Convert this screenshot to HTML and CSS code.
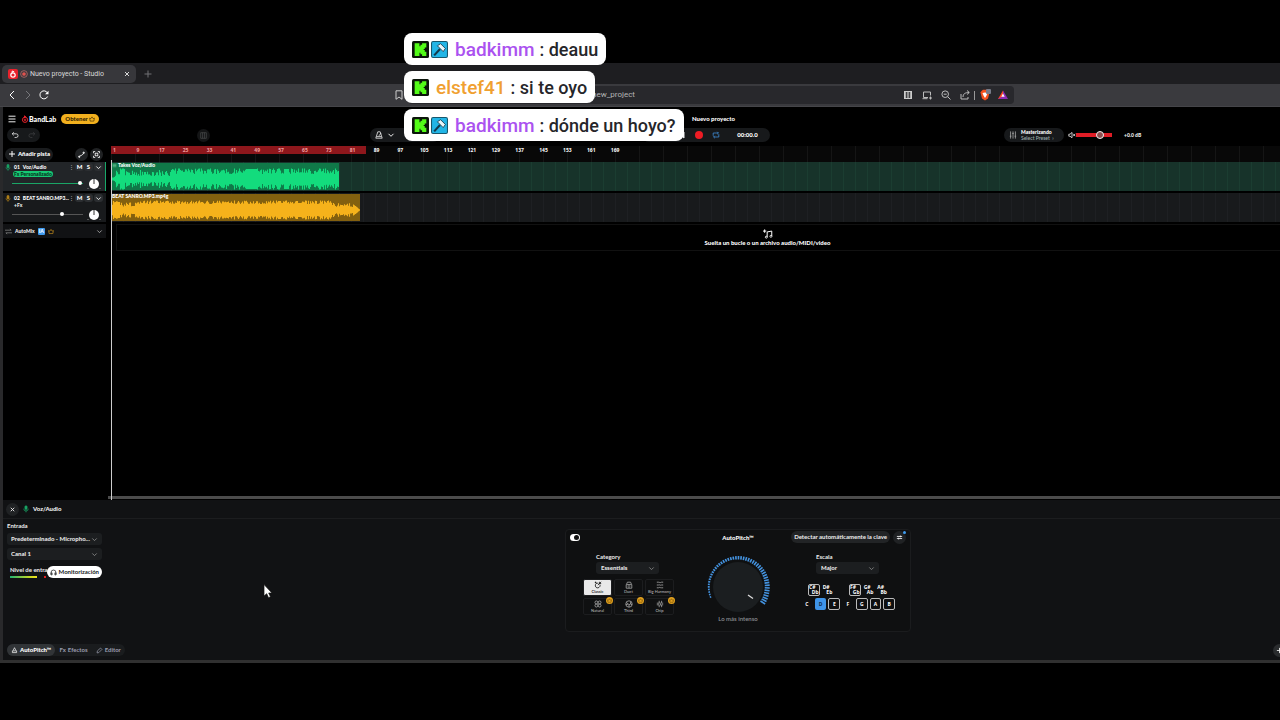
FILE: index.html
```html
<!DOCTYPE html>
<html lang="es">
<head>
<meta charset="utf-8">
<title>Nuevo proyecto - Studio</title>
<link rel="stylesheet" href="styles.css">
</head>
<body>
<svg class="defs" aria-hidden="true">
  <symbol id="chevron" viewBox="0 0 8 8"><path d="M1.5 2.8 4 5.3l2.5-2.5"/></symbol>
  <symbol id="mic" viewBox="0 0 8 10"><rect x="2.6" y=".6" width="2.8" height="5" rx="1.4" fill="currentColor"/><path d="M1 4.6a3 3 0 0 0 6 0M4 7.6v2"/></symbol>
  <symbol id="crown" viewBox="0 0 10 10"><path d="M1 3.500 3 4.400 5 1.500l2 2.900 2-.9-.9 5H1.900z"/></symbol>
  <symbol id="kick" viewBox="0 0 16 16"><rect width="16" height="16" rx="1.500" fill="#0b150a"/><path fill="#53fc18" stroke="none" d="M2.500 2H7v3h1V3.500h1.500V2h4v4H12v1.500h-1v1h1V10h1.500v4h-4v-1.500H8V11H7v3H2.500z"/></symbol>
  <symbol id="hammer" viewBox="0 0 16 16"><rect x=".5" y=".5" width="15" height="15" rx="1.500" fill="#22b5e6" stroke="#17576d"/><path d="M3 13.500 8.500 7.500" stroke="#14394b" stroke-width="2"/><path d="m6 4.500 3-2 4.500 4.500-2 3z" fill="#e9f5fa" stroke="#14394b" stroke-width=".8"/></symbol>
</svg>

<main class="browser">
  <nav class="tabbar">
    <div class="tab">
      <svg class="favicon" viewBox="0 0 10 10"><rect width="10" height="10" rx="2" fill="#e8222c" stroke="none"/><circle cx="5" cy="6" r="2.200" stroke="#fff" stroke-width="1.200"/><path d="M4.200 4V2l2 .8" stroke="#fff"/></svg>
      <svg class="rec-mark" viewBox="0 0 10 10"><circle cx="5" cy="5" r="4.200" stroke="#b86a68"/><circle cx="5" cy="5" r="2.300" fill="#e0524e" stroke="none"/></svg>
      <span class="tab-title">Nuevo proyecto - Studio</span>
      <button class="plain" aria-label="Cerrar pestaña"><svg viewBox="0 0 8 8"><path d="m2 2 4 4M6 2 2 6"/></svg></button>
    </div>
    <button class="plain new-tab" aria-label="Nueva pestaña"><svg viewBox="0 0 8 8"><path d="M4 .5v7M.5 4h7"/></svg></button>
  </nav>

  <div class="toolbar">
    <button class="plain nav-btn" aria-label="Atrás"><svg viewBox="0 0 10 10"><path d="M7 1 3 5l4 4"/></svg></button>
    <button class="plain nav-btn dim" aria-label="Adelante"><svg viewBox="0 0 10 10"><path d="m3 1 4 4-4 4"/></svg></button>
    <button class="plain nav-btn" aria-label="Recargar"><svg viewBox="0 0 10 10"><path d="M8.600 6.500A4 4 0 1 1 8.500 3"/><path d="M9.500.8v3.400H6z" fill="currentColor" stroke="none"/></svg></button>
    <button class="plain bookmark" aria-label="Marcador"><svg viewBox="0 0 10 10"><path d="M2 .8h6v8.500L5 7 2 9.300z"/></svg></button>
    <div class="url">
      <span class="address">new_project</span>
      <svg viewBox="0 0 10 10"><rect x="1.500" y="1.500" width="7" height="7" fill="#aaa" stroke="#ccc"/><path d="M3.700 2v6M6.300 2v6" stroke="#29292d"/></svg>
      <svg viewBox="0 0 10 10"><path d="M6 7.500H1.500V2h7v3.500M.5 8.700h5M7 8h3M8.500 6.500v3"/></svg>
      <svg viewBox="0 0 10 10"><circle cx="4.200" cy="4.200" r="3.300"/><path d="m6.700 6.700 2.800 2.800M2.700 4.200h3"/></svg>
      <svg viewBox="0 0 10 10"><path d="M1 4v5h7V7M3 7c0-3 2-4.500 6-4.500M7 .5l2.300 2L7 4.500"/></svg>
      <i class="url-sep"></i>
      <svg class="brave" viewBox="0 0 12 12"><path d="M2.500 2 4 .8h4L9.500 2l1 1.500-1.500 6L6 11.500l-3-2-1.500-6z" fill="#f4511e" stroke="none"/><path d="M3.500 4 6 3.400 8.500 4 7.500 6.500 6 9 4.500 6.500z" fill="#fff" stroke="none"/><rect x="7" y="0" width="5" height="5" rx="1" fill="#777b88" stroke="none"/></svg>
      <svg viewBox="0 0 10 10"><path d="M5 .5 0 9h5l1-3z" fill="#ff4724" stroke="none"/><path d="M5 .5 10 9H0l5-3z" fill="#8e2bb4" stroke="none"/><path d="m5 3.500 1.700 3.200H3.300z" fill="#fff" stroke="none"/></svg>
    </div>
  </div>

  <div class="app">
    <header class="head">
      <div class="brandbar">
        <button class="plain" aria-label="Menú"><svg class="burger" viewBox="0 0 8 8"><path d="M.5 1.200h7M.5 4h7M.5 6.800h7"/></svg></button>
        <a class="brand" href="#"><svg viewBox="0 0 8 8"><path d="M3.500 3V.8L5 2" /><circle cx="4" cy="4.800" r="2.600"/><circle cx="4" cy="4.800" r=".8"/></svg>BandLab</a>
        <button class="upgrade">Obtener <svg viewBox="0 0 10 10"><use href="#crown"/></svg></button>
      </div>
      <h1>Nuevo proyecto</h1>
    </header>
    <div class="controls">
      <div class="pill undo">
        <button class="plain" aria-label="Deshacer"><svg viewBox="0 0 10 10"><path d="M3.500 1.500 1.500 3.500l2 2M1.500 3.500h5a2.300 2.300 0 0 1 0 4.600H4.500"/></svg></button>
        <button class="plain dim" aria-label="Rehacer"><svg viewBox="0 0 10 10"><path d="m6.500 1.500 2 2-2 2M8.500 3.500h-5a2.300 2.300 0 0 0 0 4.600h2"/></svg></button>
      </div>
      <button class="round keys-btn" aria-label="Teclado"><svg viewBox="0 0 10 10"><path d="M1 1h8v8H1zM3.700 1v8M6.300 1v8"/></svg></button>
      <div class="pill metro">
        <button class="plain" aria-label="Metrónomo"><svg viewBox="0 0 10 10"><path d="M3.500 1h3L9 9H1zM2 7h6M5 6 7.500 2.500"/></svg></button>
        <button class="plain" aria-label="Opciones"><svg viewBox="0 0 8 8"><use href="#chevron"/></svg></button>
      </div>
      <div class="pill transport">
        <button class="plain" aria-label="Inicio"><svg viewBox="0 0 8 8"><path d="M6 1v6L2 4z" fill="#fff"/></svg></button>
        <button class="plain" aria-label="Grabar"><i class="rec"></i></button>
        <button class="plain loop" aria-label="Bucle"><svg viewBox="0 0 10 10"><path d="M1.500 6V2.500H8M6.500 1 8 2.500 6.500 4M8.500 4v3.500H2M3.500 6 2 7.500 3.500 9"/></svg></button>
        <output>00:00.0</output>
      </div>
      <button class="pill master"><svg viewBox="0 0 10 10"><path d="M2 .5v9M5 .5v9M8 .5v9M1 6.500h2M4 3h2M7 6.500h2"/></svg><span><b>Masterizando</b><small>Select Preset &nbsp;›</small></span></button>
      <svg class="mute" viewBox="0 0 10 8"><path d="M1 3v2.500h1.500L5 7.500V.8L2.500 3zM6.500 2.500l2.500 3M9 2.500l-2.500 3"/></svg>
      <input class="volume" type="range" aria-label="Volumen general" value="70">
      <span class="db">+0.0 dB</span>
    </div>

    <div class="workspace">
      <aside class="tracks">
        <div class="track-tools">
          <button class="pill add"><svg viewBox="0 0 8 8"><path d="M4 1v6M1 4h6"/></svg>Añadir pista</button>
          <button class="round" aria-label="Automatización"><svg viewBox="0 0 8 8"><path d="m1.800 6.200 1.200-1.200h1.200l1.600-2h1"/><circle cx="1.500" cy="6.500" r=".8" fill="currentColor"/><circle cx="6.500" cy="2" r=".8" fill="currentColor"/></svg></button>
          <button class="round" aria-label="Ajustar"><svg viewBox="0 0 8 8"><rect x="2.500" y="2.500" width="3" height="3"/><path d="M.5 2.500v-2h2M5.500.5h2v2M7.500 5.500v2h-2M2.500 7.500h-2v-2"/></svg></button>
        </div>
        <section class="track green selected">
          <div class="track-row"><svg class="tmic" viewBox="0 0 8 10"><use href="#mic"/></svg><b>01</b><b class="tname">Voz/Audio</b><i class="dots">⋮</i><button class="ms">M</button><button class="ms">S</button><button class="ms" aria-label="Más"><svg viewBox="0 0 8 8"><use href="#chevron"/></svg></button></div>
          <button class="fx on">Fx Personalizado</button>
          <div class="track-row mix"><input type="range" class="fader" aria-label="Volumen pista 1" value="98"><svg class="knob" viewBox="0 0 14 12"><circle cx="7" cy="6" r="5" fill="#fff" stroke="none"/><path d="M7 1v5" stroke="#333"/><path d="M1 10v1M13 10v1" stroke="#888"/></svg></div>
        </section>
        <section class="track yellow">
          <div class="track-row"><svg class="tmic" viewBox="0 0 8 10"><use href="#mic"/></svg><b>02</b><b class="tname">BEAT SANRO.MP3...</b><i class="dots">⋮</i><button class="ms">M</button><button class="ms">S</button><button class="ms" aria-label="Más"><svg viewBox="0 0 8 8"><use href="#chevron"/></svg></button></div>
          <button class="fx">+Fx</button>
          <div class="track-row mix"><input type="range" class="fader" aria-label="Volumen pista 2" value="71"><svg class="knob" viewBox="0 0 14 12"><circle cx="7" cy="6" r="5" fill="#fff" stroke="none"/><path d="M7 1v5" stroke="#333"/><path d="M1 10v1M13 10v1" stroke="#888"/></svg></div>
        </section>
        <section class="automix"><svg viewBox="0 0 8 8"><path d="M0 2.500h7M5.500 1 7 2.500M8 5.500H1M2.500 7 1 5.500"/></svg><b>AutoMix</b><em>IA</em><svg class="gold" viewBox="0 0 10 10"><use href="#crown"/></svg><svg class="end" viewBox="0 0 8 8"><use href="#chevron"/></svg></section>
      </aside>

      <div class="timeline">
        <div class="ruler"><div class="ruler-labels" id="ruler"></div></div>
        <div class="lane lane-green"><div class="clip clip-green"><span><svg viewBox="0 0 8 8"><path d="M1 2h6M1 4h6M1 6h6"/></svg><b>Takes</b> &nbsp;Voz/Audio</span><svg class="wave" id="wave-voice" viewBox="0 0 228 22" preserveAspectRatio="none"></svg></div></div>
        <div class="lane lane-yellow"><div class="clip clip-yellow"><span>BEAT SANRO.MP3.mp4g</span><svg class="wave" id="wave-beat" viewBox="0 0 249 22" preserveAspectRatio="none"></svg></div></div>
        <div class="drop"><svg viewBox="0 0 12 12"><path d="M5 9.500V3.500l5.500-1v6M2 .5v4M0 2.500h4" stroke-width="1.200"/><circle cx="4" cy="9.800" r="1.200"/><circle cx="9.500" cy="8.800" r="1.200"/></svg>Suelta un bucle o un archivo audio/MIDI/video</div>
        <div class="space"></div>
        <div class="scrollbar"></div>
        <i class="playhead"></i>
      </div>
    </div>

    <section class="panel">
      <header class="panel-head"><button class="round" aria-label="Cerrar"><svg viewBox="0 0 8 8"><path d="m2 2 4 4M6 2 2 6"/></svg></button><svg class="tmic green" viewBox="0 0 8 10"><use href="#mic"/></svg><b>Voz/Audio</b></header>
      <div class="panel-body">
        <div class="inputs">
          <label for="source">Entrada</label>
          <div class="select"><select id="source"><option>Predeterminado - Micropho...</option></select><svg viewBox="0 0 8 8"><use href="#chevron"/></svg></div>
          <div class="select"><select aria-label="Canal"><option>Canal 1</option></select><svg viewBox="0 0 8 8"><use href="#chevron"/></svg></div>
          <div class="level"><span>Nivel de entrad</span><div class="meter"><i></i></div>
            <button class="monitor"><svg viewBox="0 0 10 10"><path d="M1.500 8V5a3.500 3.500 0 0 1 7 0v3M1.500 5.500H3v3H1.500zM7 5.500h1.500v3H7z"/></svg>Monitorización</button></div>
        </div>

        <div class="pitch">
          <div class="pitch-head">
            <button class="toggle" role="switch" aria-checked="true" aria-label="Activar AutoPitch"></button>
            <h2>AutoPitch™</h2>
            <div class="pitch-actions"><button class="pill detect">Detectar automáticamente la clave</button><button class="round tune" aria-label="Ajustes"><svg viewBox="0 0 8 8"><path d="M1 2.800h6M1 5.200h6M5 1.800v2M3 4.200v2"/></svg></button></div>
          </div>
          <div class="pitch-body">
            <div class="category">
              <div class="field"><label for="cat">Category</label><div class="select"><select id="cat"><option>Essentials</option></select><svg viewBox="0 0 8 8"><use href="#chevron"/></svg></div></div>
              <div class="presets">
                <button class="active"><svg viewBox="0 0 10 10"><path d="M5.500 2.800C3 2 1.200 4 1.700 6.300s3 3 4.600 1.700S7.800 5.500 7.300 4.500M4.800 5.200 9 1M6.800 1v2.200H9M2 .8v2M1 1.800h2"/></svg>Classic</button>
                <button><svg viewBox="0 0 10 10"><path d="M1.500 4.500h7V9h-7zM2 4l1-2.500h4L8 4M5 4.500V9M3 6.500h.5M6.500 6.500H7"/></svg>Duet</button>
                <button><svg viewBox="0 0 10 10"><path d="M1 1.500h2c1.500 0 2 1 4 0h2M1 5h2c1.500-1 2 1 4 0h2M1 8.500h2c1.500-1 2 0 4 0h2"/></svg>Big Harmony</button>
                <button><svg viewBox="0 0 10 10"><circle cx="3" cy="3" r="1.800"/><circle cx="7" cy="3" r="1.800"/><circle cx="3" cy="7" r="1.800"/><circle cx="7" cy="7" r="1.800"/></svg>Natural<i><svg viewBox="0 0 10 10"><use href="#crown"/></svg></i></button>
                <button><svg viewBox="0 0 10 10"><circle cx="5" cy="5" r="4"/><path d="M5 9V6L2 3M5 6l2-1V2M1 6l3-1M7 5l2 1"/></svg>Third<i><svg viewBox="0 0 10 10"><use href="#crown"/></svg></i></button>
                <button><svg viewBox="0 0 10 10"><path d="M4 1v3H1M7 1v3h2M4 9V6H1M7 9V6h2M5 3l1 4"/></svg>Chip<i><svg viewBox="0 0 10 10"><use href="#crown"/></svg></i></button>
              </div>
            </div>
            <div class="dial"><svg id="dial" viewBox="-33 -33 66 60"><circle r="25" fill="#1b1e20" stroke="none"/><path d="m10 8 5 3.500" stroke="#ddd" stroke-width="1.300"/></svg><span>Lo más intenso</span></div>
            <div class="scale">
              <div class="field"><label for="scale">Escala</label><div class="select"><select id="scale"><option>Major</option></select><svg viewBox="0 0 8 8"><use href="#chevron"/></svg></div></div>
              <div class="notes sharps"><button class="in"><span>C#</span><span>Db</span></button><button><span>D#</span><span>Eb</span></button><span></span><button class="in"><span>F#</span><span>Gb</span></button><button><span>G#</span><span>Ab</span></button><button><span>A#</span><span>Bb</span></button></div>
              <div class="notes"><button>C</button><button class="root">D</button><button class="in">E</button><button>F</button><button class="in">G</button><button class="in">A</button><button class="in">B</button></div>
            </div>
          </div>
        </div>
      </div>
      <footer class="panel-foot">
        <div class="pill tabs"><button class="current"><svg viewBox="0 0 10 10"><path d="M5 1 3 5M5 1l2 4M2 5.500h6v2.500H2z"/></svg>AutoPitch™</button><button><i>Fx</i> Efectos</button><button><svg viewBox="0 0 10 10"><path d="m1.500 8.500.5-3 4.500-4 2 2-4.500 4.500z"/></svg>Editor</button></div>
        <button class="round help" aria-label="Ayuda"><svg viewBox="0 0 8 8"><path d="M4 1v6M1 4h6"/></svg></button>
      </footer>
    </section>
  </div>
</main>

<ul class="chat">
  <li><svg viewBox="0 0 16 16"><use href="#kick"/></svg><svg viewBox="0 0 16 16"><use href="#hammer"/></svg><b class="violet">badkimm</b><span>: deauu</span></li>
  <li><svg viewBox="0 0 16 16"><use href="#kick"/></svg><b class="orange">elstef41</b><span>: si te oyo</span></li>
  <li><svg viewBox="0 0 16 16"><use href="#kick"/></svg><svg viewBox="0 0 16 16"><use href="#hammer"/></svg><b class="violet">badkimm</b><span>: dónde un hoyo?</span></li>
</ul>
<svg class="cursor" viewBox="0 0 10 15"><path d="M1 1v11.500l2.700-2.300 1.800 4 2-.9-1.800-3.800H9z" fill="#fff" stroke="#111" stroke-width=".7"/></svg>
<script src="app.js"></script>
</body>
</html>
```
FILE: styles.css
```css
* { box-sizing: border-box; }
html { background: #000; }
body {
  margin: 0;
  min-height: 100vh;
  padding: 63px 0 57px;
  display: flex;
  flex-direction: column;
  position: relative;
  overflow: hidden;
  background: #000;
  color: #eee;
  font: 600 6px/8px Lato, "Open Sans", sans-serif;
}
.defs { position: absolute; width: 0; height: 0; }
svg { width: 8px; height: 8px; fill: none; stroke: currentColor; stroke-width: 1; flex: none; display: block; }
button { font: inherit; color: inherit; border: 0; padding: 0; margin: 0; background: none; display: flex; align-items: center; justify-content: center; flex: none; }
h1, h2 { margin: 0; font: inherit; font-weight: 900; color: #fff; }
b { font-weight: 900; }
i, em { font-style: normal; }
input[type=range] { appearance: none; margin: 0; background: none; }

.browser { flex: 1; display: flex; flex-direction: column; overflow: hidden; border-bottom: 3px solid #303030; }

/* browser chrome */
.tabbar { display: flex; align-items: center; height: 21px; padding-left: 2px; background: #1e1e21; }
.tab { display: flex; align-items: center; gap: 2px; width: 134px; height: 18px; padding: 0 5px 0 6px; border-radius: 5px; background: #37373b; color: #d8d8d8; font: 400 7px/10px Roboto, sans-serif; }
.tab .favicon { width: 10px; height: 10px; }
.tab-title { flex: 1; white-space: nowrap; }
.new-tab { margin-left: 8px; color: #707074; }
.toolbar { display: flex; align-items: center; height: 23px; padding-left: 6px; background: #3a3a3e; border-bottom: 1px solid #454549; }
.nav-btn { width: 11px; margin-right: 5px; color: #fff; }
.nav-btn svg, .bookmark svg { width: 10px; height: 10px; }
.dim { color: #77777b; }
.bookmark { margin-left: 340px; color: #ccc; }
.url { display: flex; align-items: center; gap: 9px; width: 606px; height: 18px; margin-left: 4px; padding-right: 6px; border-radius: 4px; background: #28282c; color: #bbb; }
.url svg { width: 10px; height: 10px; }
.url .brave { width: 12px; height: 12px; margin-right: -2px; }
.address { flex: 1; padding-left: 184px; font: 400 8px/12px Roboto, sans-serif; color: #b4b4b4; }
.url-sep { width: 1px; height: 9px; margin: 0 -5px; background: #999; }

/* studio */
.app { flex: 1; display: flex; flex-direction: column; width: calc(100% + 139px); border-left: 3px solid #29292b; }
.head { display: grid; grid-template-columns: 1fr auto 1fr; align-items: center; height: 20px; padding: 3px 0 0 5px; }
.brandbar { display: flex; align-items: center; gap: 5px; }
.brand { display: flex; align-items: center; color: #fff; text-decoration: none; font-size: 7px; font-weight: 900; }
.brand svg { color: #e8222c; }
.upgrade { gap: 1px; height: 10px; padding: 0 4px; border-radius: 5px; background: #f2b01e; color: #332200; font-weight: 900; }
.upgrade svg { width: 6px; }
.controls { display: flex; align-items: center; height: 16px; padding-left: 4px; }
.pill { display: flex; align-items: center; height: 14px; border-radius: 7px; background: #17191b; }
.undo { width: 33px; justify-content: space-around; }
.undo .dim { color: #3c3e40; }
.round { width: 13px; height: 13px; border-radius: 50%; background: #202224; }
.round svg { width: 7px; height: 7px; }
.keys-btn { margin-left: 157px; color: #4a4c4e; background: #141516; }
.metro { width: 70px; margin-left: 160px; padding-left: 5px; gap: 4px; }
.transport { width: 128px; margin-left: 202px; padding-left: 36px; gap: 9px; }
.rec { width: 8px; height: 8px; border-radius: 50%; background: #ed1c24; }
.loop { color: #3f8cd6; }
.transport output { flex: 1; padding-right: 4px; text-align: center; font-weight: 900; color: #fff; }
.master { width: 60px; margin-left: 234px; padding: 0 5px; gap: 4px; justify-content: flex-start; color: #aaa; font-size: 5px; line-height: 6px; text-align: left; }
.master b, .master small { display: block; }
.master b { color: #fff; }
.master small { font-size: 5px; color: #9aa; }
.mute { margin-left: 4px; }
.volume { width: 36px; height: 10px; margin-left: 7px; }
.volume::-webkit-slider-runnable-track { height: 4px; background: linear-gradient(#e01d26 40%, #500 40% 60%, #e01d26 60%); }
.volume::-webkit-slider-thumb { appearance: none; width: 8px; height: 8px; margin-top: -2px; border: 1px solid #eee; border-radius: 50%; background: #8a5050; }
.db { margin-left: 12px; font-weight: 900; font-size: 5px; }

.workspace { flex: 1; display: flex; min-height: 200px; padding-top: 3px; }
.tracks { width: 103px; flex: none; }
.track-tools { display: flex; align-items: center; height: 16px; padding: 0 3px 0 2px; gap: 2px; }
.add { width: 48px; height: 13px; gap: 2px; margin-right: auto; color: #fff; font-weight: 900; background: #1a1c1e; }
.track { height: 29px; margin-bottom: 2px; padding: 1px 2px 0; background: #181a1c; border-right: 1px solid transparent; }
.track.selected { background: #222528; border-color: #18a868; }
.track-row { display: flex; align-items: center; height: 8px; font-size: 5px; color: #fff; }
.track-row b { margin-left: 3px; }
.tmic { width: 6px; height: 7px; }
.green .tmic, .tmic.green { color: #1aa566; }
.yellow .tmic { color: #b5841a; }
.track-row .tname { flex: 1; white-space: nowrap; }
.dots { width: 6px; color: #999; }
.ms { min-width: 9px; height: 8px; font-weight: 900; font-size: 6px; background: #2b2e31; border-radius: 3px; }
.ms svg { width: 7px; height: 7px; }
.ms:last-child { margin-left: 1px; }
.fx { height: 6px; margin-left: 8px; padding: 0 1px; border-radius: 3px; font-size: 5px; line-height: 6px; font-weight: 900; }
.fx.on { background: #16c873; color: #06321d; }
.mix { height: 13px; padding: 0 2px 0 7px; }
.fader { flex: 1; min-width: 0; height: 8px; color: #555; }
.green .fader { color: #1aa566; }
.fader::-webkit-slider-runnable-track { height: 1px; background: currentColor; }
.fader::-webkit-slider-thumb { appearance: none; width: 4px; height: 4px; margin-top: -2px; border-radius: 50%; background: #fff; }
.knob { width: 14px; height: 12px; margin-left: 4px; }
.automix { display: flex; align-items: center; gap: 3px; height: 14px; padding: 0 3px 0 2px; background: #111214; font-size: 5px; }
.automix svg { width: 7px; height: 7px; color: #777; }
.automix em { padding: 0 1px; border-radius: 1px; background: #3f9bef; color: #fff; font-weight: 900; line-height: 7px; }
.automix .gold { width: 6px; color: #e2a11e; }
.automix .end { margin-left: auto; color: #aaa; }

.timeline { flex: 1; display: flex; flex-direction: column; position: relative; padding-left: 5px; }
.ruler { height: 16px; background: repeating-linear-gradient(90deg, #151515 0 1px, transparent 1px 24px) #080808; }
.ruler-labels { display: grid; grid-template-columns: 15px repeat(21, 1fr); width: 516px; height: 8px; font: 700 5px/8px "Open Sans", sans-serif; text-align: center; background: linear-gradient(90deg, #8e171c 255px, transparent 255px); color: #fff; }
.ruler-labels .looped { color: #f0a0a0; }
.ruler-labels :first-child { text-align: left; padding-left: 2px; }
.lane { height: 29px; margin-bottom: 2px; padding: 1px 0; }
.lane-green { background: repeating-linear-gradient(90deg, #1b3d31 0 1px, transparent 1px 12px) #17332a; }
.lane-yellow { background: repeating-linear-gradient(90deg, #1e2023 0 1px, transparent 1px 12px) #181a1c; }
.clip { display: flex; flex-direction: column; height: 100%; color: #fff; font-size: 5px; line-height: 5px; font-weight: 900; }
.clip span { display: flex; height: 5px; padding-left: 1px; }
.clip span svg { width: 5px; height: 5px; }
.clip-green { width: 228px; background: #107848; }
.clip-yellow { width: 249px; background: #83600f; }
.clip-green span svg { margin-right: 1px; color: #6dc79b; }
.wave { width: 100%; height: 22px; }
.clip-green .wave { color: #13dc7d; }
.clip-yellow .wave { color: #f6b21b; }
.drop { display: flex; flex-direction: column; align-items: center; height: 27px; margin-left: 5px; padding-top: 4px; border: 1px solid #111; font-weight: 900; color: #fff; }
.drop svg { width: 10px; height: 10px; }
.space { flex: 1; }
.scrollbar { height: 3px; margin: 0 0 1px -3px; background: #4b4b4b; }
.playhead { position: absolute; left: 5px; top: 14px; bottom: 0; width: 1px; background: #ccc; }

/* lower panel */
.panel { background: #111214; }
.panel-head { display: flex; align-items: center; gap: 4px; height: 19px; padding-left: 3px; border-bottom: 1px solid #1c1d1f; font-size: 6px; }
.panel-head .tmic { height: 8px; }
.panel-body { display: grid; grid-template-columns: 105px 1fr 51px; align-items: start; height: 125px; }
.inputs { padding: 3px 0 0 4px; width: 99px; display: flex; flex-direction: column; gap: 3px; }
label { font-weight: 700; }
.select { position: relative; height: 12px; }
.select select { appearance: none; width: 100%; height: 12px; border: 0; border-radius: 3px; padding: 0 12px 0 5px; background: #1c1e20; color: #e4e4e4; font: 900 6px/12px Lato, sans-serif; }
.inputs .select select { padding: 0 10px 0 4px; }
.select svg { position: absolute; right: 4px; top: 3px; width: 7px; height: 7px; color: #888; }
.level { position: relative; padding: 3px 0 0 3px; font-weight: 700; }
.meter { display: flex; width: 36px; height: 2px; margin-top: 2px; background: linear-gradient(90deg, #22b473, #c9d822 20px, #f0e020 27px, transparent 27px); }
.meter i { width: 2px; height: 2px; margin-left: auto; background: #d22; }
.monitor { position: absolute; right: 0; top: 3px; gap: 2px; height: 12px; padding: 0 3px; border-radius: 6px; background: #fff; color: #16181a; font-weight: 700; }
.monitor svg { width: 7px; height: 7px; }

.pitch { justify-self: center; width: 346px; height: 103px; margin-top: 10px; padding: 1px 4px; border: 1px solid #1b1c1e; border-radius: 4px; background: #0f1011; }
.pitch-head { display: grid; grid-template-columns: 1fr auto 1fr; align-items: center; height: 13px; }
.toggle { justify-content: flex-end; width: 10px; height: 7px; padding: 1px; border-radius: 4px; background: #fff; }
.toggle::after { content: ""; width: 5px; height: 5px; border-radius: 50%; background: #111; }
.pitch-actions { display: flex; justify-content: flex-end; gap: 3px; }
.detect { height: 12px; padding: 0 3px; background: #222426; font-weight: 700; }
.tune { position: relative; }
.tune::after { content: ""; position: absolute; right: 0; top: 0; width: 3px; height: 3px; border-radius: 50%; background: #3f9bef; }
.pitch-body { display: grid; grid-template-columns: 1fr 70px 1fr; padding-top: 9px; }
.field { width: 63px; display: flex; flex-direction: column; }
.field .select { margin-top: 1px; }
.category { padding-left: 13px; }
.category .field { margin-left: 13px; }
.presets { display: grid; grid-template-columns: repeat(3, 29px); gap: 2px; margin-top: 5px; }
.presets button { position: relative; flex-direction: column; height: 17px; border: 1px solid #1c1d1f; border-radius: 2px; font-size: 4px; line-height: 5px; color: #aaa; white-space: nowrap; }
.presets .active { background: #e9e9e9; color: #111; }
.presets i { position: absolute; right: -2px; top: -2px; width: 7px; height: 7px; padding: 1px; border-radius: 50%; background: #e2a11e; color: #5d3f00; }
.presets i svg { width: 5px; height: 5px; }
.dial { display: flex; flex-direction: column; align-items: center; color: #8b8e91; white-space: nowrap; }
.dial svg { width: 66px; height: 60px; margin-top: 1px; }
.dial span { margin-top: 1px; }
.scale { padding-left: 31px; }
.scale .field { margin-left: 12px; }
.notes { display: grid; grid-template-columns: repeat(7, 1fr); gap: 2px; width: 94px; margin: 2px 0 0 -3px; font: 700 5px/5px "Open Sans", sans-serif; }
.notes button { height: 12px; border: 1px solid transparent; border-radius: 2px; color: #fff; }
.notes .in { border-color: #bbb; }
.notes .root { background: #3f94e8; color: #0e2a48; }
.sharps { margin-top: 10px; padding: 0 7px; grid-template-columns: repeat(6, 1fr); }
.sharps button { flex-direction: column; line-height: 5px; }
.sharps button span:first-child { align-self: flex-start; }
.sharps button span:last-child { align-self: flex-end; }

.panel-foot { display: flex; align-items: center; justify-content: space-between; height: 16px; padding: 0 139px 4px 4px; }
.tabs { height: 12px; background: #1a1c1e; color: #9a9cae; }
.tabs button { gap: 2px; height: 12px; padding: 0 4px; border-radius: 6px; font-weight: 700; }
.tabs .current { background: #313437; color: #fff; font-weight: 900; }
.tabs svg { width: 7px; height: 7px; }
.help { margin-right: -6px; background: #2a2c2e; }

/* overlays */
.chat { position: absolute; left: 404px; top: 33px; margin: 0; padding: 0; list-style: none; display: flex; flex-direction: column; align-items: flex-start; gap: 6px; }
.chat li { display: flex; align-items: center; height: 32px; padding: 1px 8px 0; border-radius: 8px; background: #fff; color: #26262a; font: 500 18px/31px Roboto, sans-serif; white-space: nowrap; }
.chat svg { width: 17px; height: 17px; margin-right: 2px; stroke: none; }
.chat b { margin: 0 5px; font-size: 19px; font-weight: 500; }
.violet { color: #ab52f0; }
.orange { color: #f0a030; }
.cursor { position: absolute; left: 263px; top: 583px; width: 10px; height: 16px; }
```
FILE: app.js
```js
const NS = "http://www.w3.org/2000/svg";

const ruler = document.getElementById("ruler");
for (let bar = 1; bar <= 169; bar += 8) {
  const label = document.createElement("span");
  label.textContent = bar;
  if (bar < 89) label.className = "looped";
  ruler.append(label);
}

function drawWave(id, width, seed, level) {
  let s = seed;
  const random = () => (s = (s * 16807) % 2147483647) / 2147483647;
  let d = "";
  for (let x = 0; x < width; x++) {
    const h = Math.min(10.5, level(x, random()));
    d += `M${x + 0.5} ${11 - h}V${11 + h}`;
  }
  const path = document.createElementNS(NS, "path");
  path.setAttribute("d", d);
  path.setAttribute("stroke-width", "1.1");
  document.getElementById(id).append(path);
}
drawWave("wave-voice", 228, 77, (x, r) => {
  if (x < 4) return 1 + r * 3;
  if (x > 8 && x < 14) return 8 + r * 3;
  if ((x > 134 && x < 146) || (x > 172 && x < 178)) return 10;
  if (x < 60) return 3 + r * 6;
  return 5 + r * 6;
});
drawWave("wave-beat", 249, 41, (x, r) => {
  if (x > 241) return (249 - x) * 0.8;
  if (x > 220) return 3 + r * 4;
  if (x < 28) return 3 + r * 6;
  return 6 + r * 3.5;
});

const dial = document.getElementById("dial");
for (let i = 0; i <= 46; i++) {
  const t = i / 46;
  const a = (160 + t * 232) * Math.PI / 180;
  const inner = 28.5 - t * 2;
  const outer = 30 + t * 2;
  const tick = document.createElementNS(NS, "path");
  tick.setAttribute("d", `M${Math.cos(a) * inner} ${Math.sin(a) * inner}L${Math.cos(a) * outer} ${Math.sin(a) * outer}`);
  tick.setAttribute("stroke", "#4493e0");
  tick.setAttribute("stroke-width", "1.6");
  dial.append(tick);
}
```
